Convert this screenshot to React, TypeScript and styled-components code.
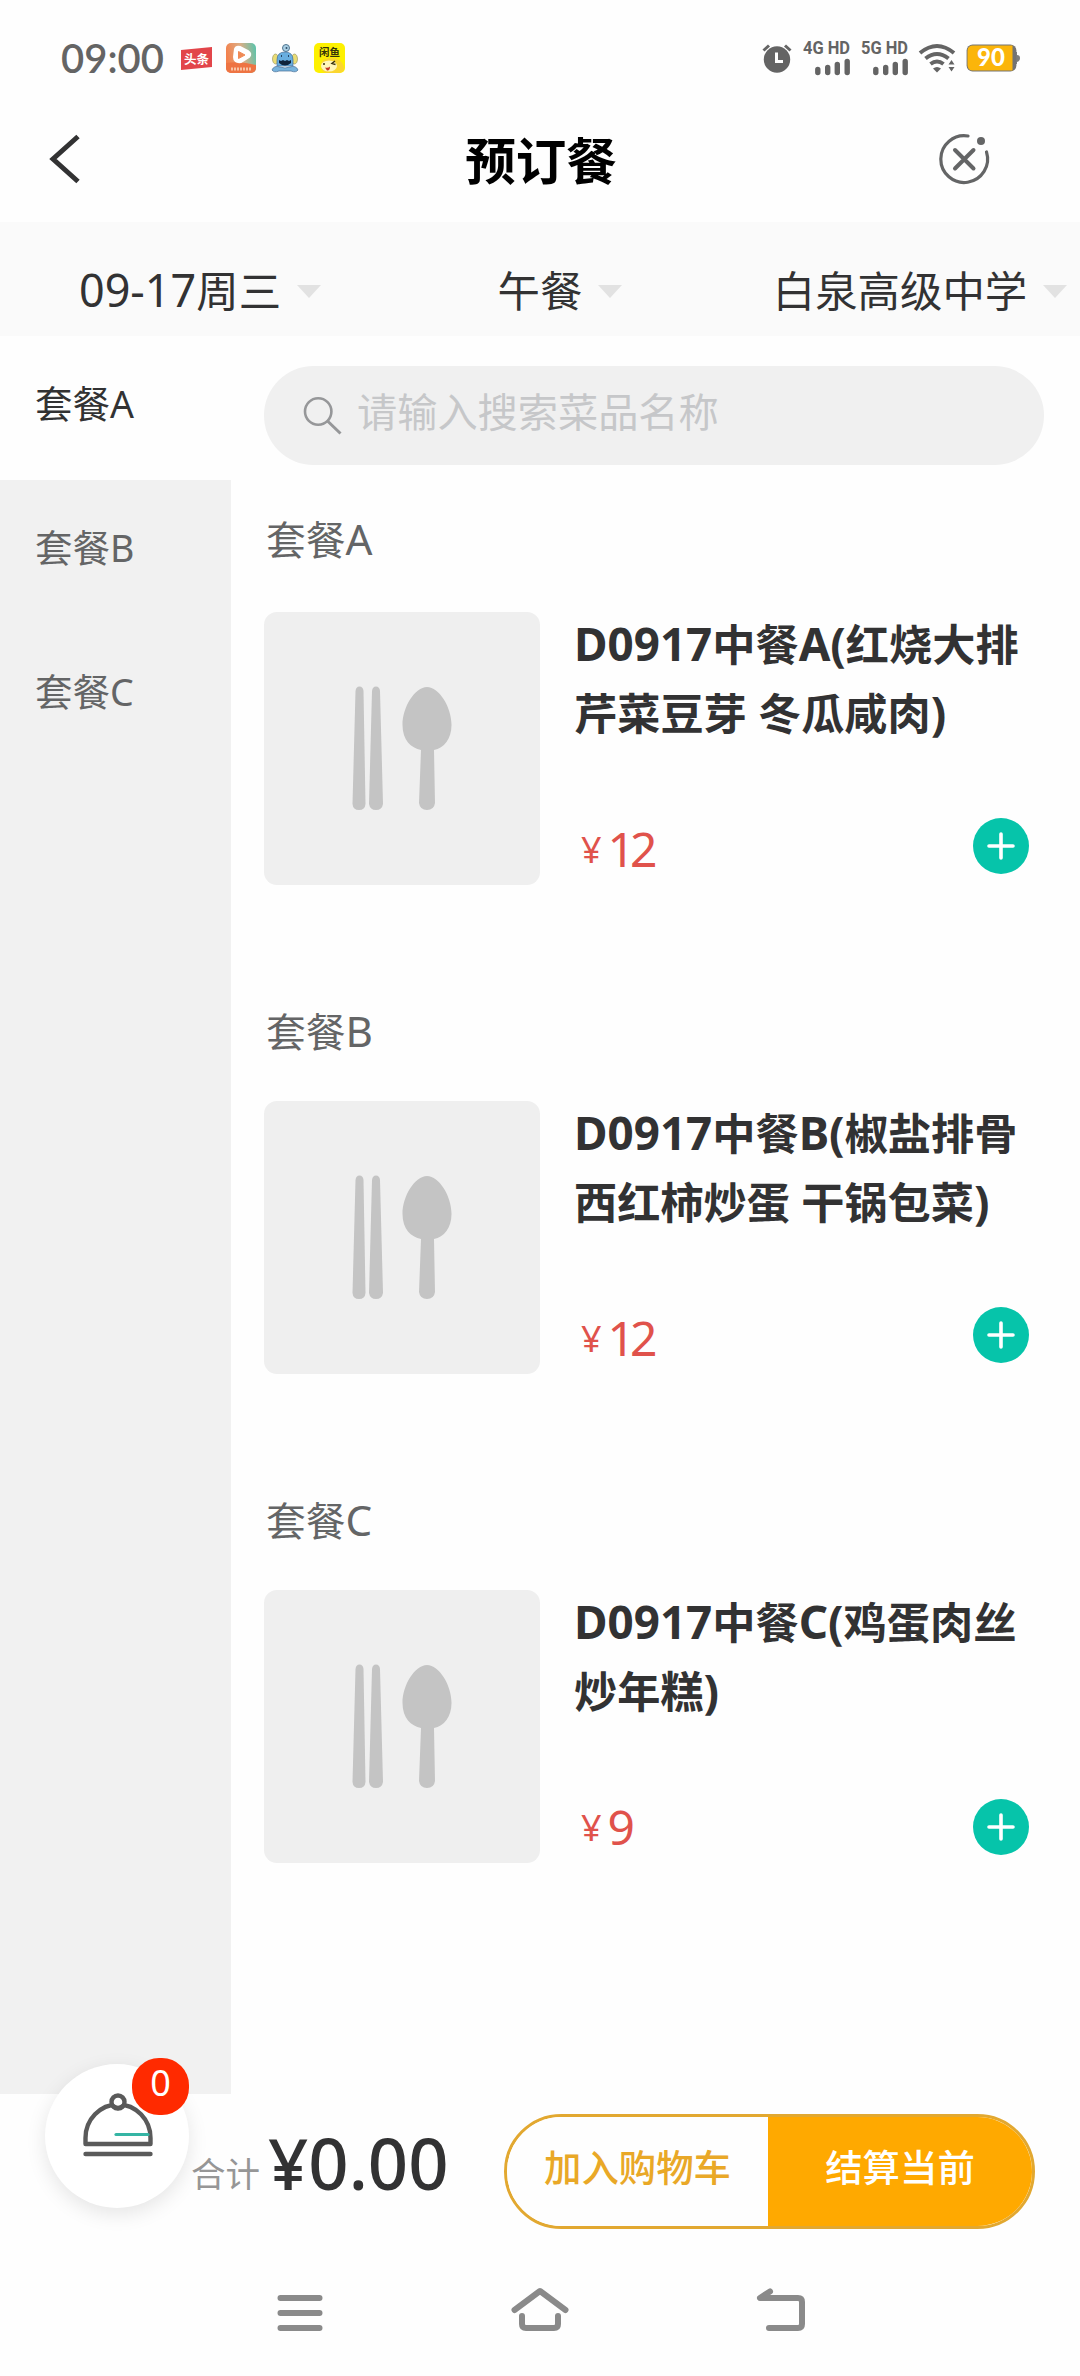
import React from "react";
import styled, { createGlobalStyle } from "styled-components";

const GlobalStyle = createGlobalStyle`
  * { box-sizing: border-box; }
  body { margin: 0; background: #fefefe; }
  button { border: 0; padding: 0; background: none; font: inherit; color: inherit; }
`;

const Screen = styled.div`
  display: flex;
  flex-direction: column;
  width: 1080px;
  height: 2376px;
  overflow: hidden;
  background: #fefefe;
  color: #323233;
  font-family: "Noto Sans", "Noto Sans CJK SC", sans-serif;
`;

/* ---------- status bar ---------- */

const StatusBar = styled.div`
  display: flex;
  align-items: center;
  justify-content: space-between;
  height: 116px;
  padding: 0 60px 0 61px;
`;

const StatusGroup = styled.div<{ $gap: number }>`
  display: flex;
  align-items: center;
  gap: ${(p) => p.$gap}px;
`;

const Clock = styled.span`
  width: 104px;
  color: #646464;
  font-family: Lato, "Noto Sans", sans-serif;
  font-size: 40px;
  font-weight: 600;
  line-height: 40px;
`;

const Glyph = styled.svg`
  display: block;
  flex: none;
  overflow: visible;
`;

const cjk = '"Noto Sans CJK SC", sans-serif';

const NewsApp = () => (
  <Glyph width="29" height="30" viewBox="0 0 29 30">
    <path d="M0 7 31 4V24L0 27Z" fill="#e2454a" />
    <text x="15.5" y="20.5" textAnchor="middle" fontFamily={cjk} fontWeight="700" fontSize="12.5" fill="#fff">头条</text>
  </Glyph>
);

const VideoApp = () => (
  <Glyph width="30" height="30" viewBox="0 0 30 30">
    <defs>
      <linearGradient id="video" x1="0" y1="0.3" x2="1" y2="0.1">
        <stop offset="0" stopColor="#f3814d" />
        <stop offset="0.5" stopColor="#dcae85" />
        <stop offset="1" stopColor="#58c4ac" />
      </linearGradient>
    </defs>
    <rect width="30" height="30" rx="5" fill="url(#video)" />
    <path d="M0 20Q15 18 30 22V25a5 5 0 0 1-5 5H5a5 5 0 0 1-5-5Z" fill="#ee7443" />
    <path d="M9 6Q10 3 14 4L22 8Q26 11 23 14L15 19Q8 20 8 14Z" fill="#fff" stroke="#fff" strokeWidth="2" />
    <path d="M12.500 8.500 19 12 12.500 15.500Z" fill="#f08a55" stroke="#f08a55" strokeLinejoin="round" />
    <path d="M5 26H25" stroke="#f8c4a5" strokeWidth="3" strokeDasharray="2 1" />
  </Glyph>
);

const MascotApp = () => (
  <Glyph width="26" height="30" viewBox="0 0 26 30">
    <circle cx="14" cy="5" r="3.5" fill="#a9cfe5" stroke="#51758f" />
    <circle cx="14.5" cy="5" r="1" fill="#31506a" />
    <ellipse cx="3.5" cy="16" rx="3" ry="5" fill="#e9dc75" stroke="#8e8c58" strokeWidth=".6" />
    <ellipse cx="22.5" cy="16" rx="3" ry="5" fill="#e9dc75" stroke="#8e8c58" strokeWidth=".6" />
    <path d="M5 17Q5 9 13 9T21 17V23H5Z" fill="#68aee0" stroke="#466f96" strokeWidth=".7" />
    <path d="M0 27Q2 22 8 24L13 25 18 24Q24 22 26 27 24 30 19 28H7Q2 30 0 27Z" fill="#78b3dc" stroke="#466f96" strokeWidth=".7" />
    <path d="M7 17 9 18 11 17 13 18 15 17 17 18 19 17V20Q13 25 7 20Z" fill="#10233b" />
    <path d="M9 13H10M16 13H17" stroke="#10233b" strokeWidth="1.6" />
  </Glyph>
);

const MarketApp = () => (
  <Glyph width="31" height="30" viewBox="0 0 31 30">
    <rect width="31" height="30" rx="5" fill="#fdf000" />
    <path d="M7 21Q8 15 17 15 27 14 30 24V27Q28 30 25 30H12Q6 28 7 21Z" fill="#fbd62f" />
    <ellipse cx="15" cy="23" rx="8" ry="5.5" fill="#fff6bb" />
    <text x="15.5" y="13" textAnchor="middle" fontFamily={cjk} fontWeight="700" fontSize="10.5" fill="#34330a">闲鱼</text>
    <path d="M10 20V22M21 18 18 20.500 21.500 21.500" stroke="#3a3210" strokeWidth="1.5" fill="none" />
    <path d="M11 24.500Q14 25.500 16 23.500 16 28 13 27.500Z" fill="#c23726" />
  </Glyph>
);

const AlarmIcon = () => (
  <Glyph width="30" height="30" viewBox="0 0 30 30">
    <circle cx="15" cy="16.5" r="13.2" fill="#646464" />
    <path d="M1.5 7.5 7 2.5M28.5 7.5 23 2.5" stroke="#646464" strokeWidth="3" />
    <path d="M14.5 9.5V18.5H21" stroke="#fff" strokeWidth="3" fill="none" />
  </Glyph>
);

const Signal = ({ label }: { label: string }) => (
  <Glyph width="47" height="34" viewBox="0 0 47 34">
    <text x="0" y="13" textLength="47" lengthAdjust="spacingAndGlyphs" fontFamily="Roboto, sans-serif" fontWeight="700" fontSize="18" fill="#646464">{label}</text>
    <path d="M14.8 28.5V31.5M24.7 26.5V31.5M34.3 23.5V31.5M44.2 20.5V31.5" stroke="#646464" strokeWidth="5.4" strokeLinecap="round" />
  </Glyph>
);

const WifiIcon = () => (
  <Glyph width="36" height="30" viewBox="0 0 36 30" fill="none" stroke="#646464" strokeWidth="4">
    <path d="M1 10Q18-4 35 10M6.5 15.5Q18 6.5 29.5 15.5M11.5 21Q18 16 24.5 21" />
    <path d="M18 29.5 14 25.5Q18 22.5 22 25.5Z" fill="#646464" stroke="none" />
    <path d="M29.5 21.5 32.5 17 35.5 21.5ZM29.5 24 32.5 28.5 35.5 24Z" fill="#646464" stroke="none" />
  </Glyph>
);

const BatteryIcon = () => (
  <Glyph width="54" height="28" viewBox="0 0 54 28">
    <path d="M49 8H51V11Q54 11 54 14T51 18V20H49Z" fill="#7d7d7d" />
    <rect x=".6" y=".6" width="49.8" height="26.8" rx="6" fill="#737373" />
    <path d="M7 1.5H46.5V26.5H7Q1.5 26.5 1.5 21V7Q1.5 1.5 7 1.5Z" fill="#fbb50a" />
    <text x="25" y="22.2" textAnchor="middle" fontFamily="Lato, sans-serif" fontWeight="900" fontSize="24" fill="#fff">90</text>
  </Glyph>
);

/* ---------- header ---------- */

const Header = styled.header`
  display: grid;
  grid-template-columns: 140px 1fr 140px;
  align-items: center;
  height: 106px;
  padding: 0 0 20px;
`;

const BackButton = styled.button`
  display: flex;
  padding-left: 49px;
`;

const CloseButton = styled.button`
  display: flex;
  justify-content: flex-end;
  padding-right: 91px;
`;

const Title = styled.h1`
  margin: 0;
  padding: 3px 0 0 2px;
  color: #000;
  font-size: 50.5px;
  font-weight: 700;
  line-height: 60px;
  text-align: center;
`;

/* ---------- filters ---------- */

const Filters = styled.nav`
  display: grid;
  grid-template-columns: repeat(3, 360px);
  height: 114px;
  padding-top: 24px;
  background: #fafafa;
`;

const Filter = styled.button`
  display: flex;
  align-items: center;
  justify-content: center;
  gap: 16px;
  color: #323233;
  font-size: 42.4px;
  line-height: 60px;
  white-space: nowrap;
`;

const Caret = styled.i`
  width: 24px;
  margin-right: -40px;
  border: 12px solid transparent;
  border-top: 13px solid #e2e2e2;
  border-bottom: 0;
`;

const Latin = styled.span`
  font-size: 1.06em;
  line-height: 1;
`;

const Mixed = ({ text }: { text: string }) => (
  <>
    {text.split(/([\w()-]+)/).map((part, i) => (i % 2 ? <Latin key={i}>{part}</Latin> : part))}
  </>
);

/* ---------- body ---------- */

const Body = styled.div`
  display: flex;
  height: 1758px;
`;

const Sidebar = styled.aside`
  width: 231px;
  background: #f1f1f1;
`;

const Category = styled.button<{ $active: boolean }>`
  display: flex;
  align-items: center;
  width: 100%;
  height: 144px;
  padding: 0 0 8px 35px;
  background: ${(p) => (p.$active ? "#fefefe" : "transparent")};
  color: ${(p) => (p.$active ? "#323233" : "#646566")};
  font-size: 37.5px;
  line-height: 50px;
`;

const Content = styled.main`
  flex: 1;
  padding: 30px 36px 0 33px;
`;

const SearchBox = styled.label`
  display: flex;
  align-items: center;
  gap: 15px;
  height: 99px;
  padding-left: 40px;
  border-radius: 50px;
  background: #f0f0f0;
`;

const Placeholder = styled.span`
  padding-bottom: 8px;
  color: #c6c7c9;
  font-size: 40.2px;
  line-height: 56px;
`;

const Section = styled.section`
  height: 489px;
`;

const SectionTitle = styled.h2<{ $first: boolean }>`
  margin: 0;
  padding: ${(p) => (p.$first ? 45 : 48)}px 0 0 2px;
  height: 147px;
  color: #646566;
  font-size: 39.8px;
  font-weight: 400;
  line-height: 60px;
`;

const Dish = styled.article`
  display: flex;
  gap: 34px;
`;

const Thumb = styled.div`
  display: flex;
  align-items: center;
  justify-content: center;
  width: 276px;
  height: 273px;
  border-radius: 13px;
  background: #efefef;
`;

const DishInfo = styled.div`
  display: flex;
  flex: 1;
  flex-direction: column;
  justify-content: space-between;
`;

const DishName = styled.h3`
  margin: -2px 0 0;
  font-size: 43.2px;
  font-weight: 700;
  line-height: 69px;
  white-space: nowrap;
`;

const NameLine = styled.span`
  display: block;
  height: 69px;
`;

const PriceRow = styled.div`
  display: flex;
  align-items: center;
  justify-content: space-between;
  height: 56px;
  margin-bottom: 11px;
  padding: 0 15px 0 7px;
`;

const Price = styled.span`
  padding-top: 5px;
  color: #e0524b;
  font-size: 48px;
  letter-spacing: -5px;
  line-height: 56px;
`;

const Currency = styled.small`
  margin-right: 6px;
  font-size: 36px;
  letter-spacing: 0;
  line-height: 1;
  vertical-align: 4px;
`;

const AddButton = styled.button<{ $last: boolean }>`
  display: flex;
  align-items: center;
  justify-content: center;
  width: 56px;
  height: 56px;
  margin-top: ${(p) => (p.$last ? 6 : 0)}px;
  border-radius: 50%;
  background: #06c4aa;
`;

/* ---------- checkout ---------- */

const Checkout = styled.footer`
  display: flex;
  height: 156px;
  padding-left: 45px;
`;

const Cart = styled.button`
  position: relative;
  display: flex;
  justify-content: center;
  width: 144px;
  height: 144px;
  margin-top: -30px;
  padding: 29px 0 0 2px;
  border-radius: 50%;
  background: #fff;
  box-shadow: 0 6px 20px rgba(0, 0, 0, 0.1);
`;

const Badge = styled.span`
  position: absolute;
  top: -6px;
  right: 0;
  width: 57px;
  height: 57px;
  border-radius: 27px;
  background: #ff2a00;
  color: #fff;
  font-size: 36px;
  line-height: 49px;
  text-align: center;
`;

const Total = styled.div`
  width: 315px;
  padding: 21px 0 0 2px;
  line-height: 96px;
  white-space: nowrap;
`;

const TotalLabel = styled.span`
  margin-right: 8px;
  color: #969696;
  font-size: 34.5px;
  line-height: 1;
  vertical-align: 3px;
`;

const TotalValue = styled.strong`
  font-size: 70.5px;
  font-weight: 500;
`;

const Actions = styled.div`
  display: grid;
  grid-template-columns: 261px 1fr;
  width: 531px;
  height: 115px;
  margin-top: 20px;
  overflow: hidden;
  border: 3px solid #e2a830;
  border-radius: 58px;
`;

const Action = styled.button<{ $primary?: boolean }>`
  padding-bottom: 11px;
  background: ${(p) => (p.$primary ? "#ffa900" : "#fefefe")};
  color: ${(p) => (p.$primary ? "#fff" : "#e9a827")};
  font-size: 37.4px;
  font-weight: 500;
`;

const SystemNav = styled.div`
  display: flex;
  justify-content: center;
  gap: 191px;
  padding: 38px 0 0 1px;
`;

const dishes = [
  { group: "套餐A", name: ["D0917中餐A(红烧大排", "芹菜豆芽 冬瓜咸肉)"], price: 12 },
  { group: "套餐B", name: ["D0917中餐B(椒盐排骨", "西红柿炒蛋 干锅包菜)"], price: 12 },
  { group: "套餐C", name: ["D0917中餐C(鸡蛋肉丝", "炒年糕)"], price: 9 },
];

export default function App() {
  return (
    <Screen>
      <GlobalStyle />
      <StatusBar>
        <StatusGroup $gap={16}>
          <Clock>09:00</Clock>
          <NewsApp />
          <VideoApp />
          <MascotApp />
          <MarketApp />
        </StatusGroup>
        <StatusGroup $gap={11}>
          <AlarmIcon />
          <Signal label="4G HD" />
          <Signal label="5G HD" />
          <WifiIcon />
          <BatteryIcon />
        </StatusGroup>
      </StatusBar>

      <Header>
        <BackButton>
          <Glyph width="31" height="48" viewBox="0 0 31 48" fill="none" stroke="#323233" strokeWidth="5">
            <path d="M29 1.5 4 24 29 46.5" />
          </Glyph>
        </BackButton>
        <Title>预订餐</Title>
        <CloseButton>
          <Glyph width="50" height="50" viewBox="0 0 50 50" fill="none" stroke="#646566" strokeWidth="3.2">
            <path d="M29 2A23.4 23.4 0 1 0 47.5 18" strokeLinecap="round" />
            <path d="M16 16 34.500 34.500M34.500 16 16 34.500" strokeWidth="4" strokeLinecap="round" />
            <circle cx="42" cy="7" r="4" fill="#646566" stroke="none" />
          </Glyph>
        </CloseButton>
      </Header>

      <Filters>
        {["09-17周三", "午餐", "白泉高级中学"].map((label) => (
          <Filter key={label}>
            <span><Mixed text={label} /></span>
            <Caret />
          </Filter>
        ))}
      </Filters>

      <Body>
        <Sidebar>
          {dishes.map((d, i) => (
            <Category key={d.group} $active={i === 0}>{d.group}</Category>
          ))}
        </Sidebar>
        <Content>
          <SearchBox>
            <Glyph width="38" height="37" viewBox="0 0 38 37" fill="none" stroke="#969799" strokeWidth="2.6">
              <circle cx="14.2" cy="14.5" r="13.2" />
              <path d="M23.5 24 36.5 36.5" strokeWidth="3" />
            </Glyph>
            <Placeholder>请输入搜索菜品名称</Placeholder>
          </SearchBox>
          {dishes.map((d, i) => (
            <Section key={d.group}>
              <SectionTitle $first={i === 0}><Mixed text={d.group} /></SectionTitle>
              <Dish>
                <Thumb>
                  <Glyph width="100" height="124" viewBox="0 0 100 124" fill="#c4c4c4">
                    <path d="M3.500 4Q4-.5 7.500-.5T11.500 4L13.500 117Q13 123 7 123T.5 117Z" />
                    <path d="M20 4Q20.500-.5 24-.5T28 4L31 117Q30 123 24 123T17 117Z" />
                    <path d="M75 0C87 0 99.500 20 99.500 38 99.500 52 92 61 82 63L83 116Q82 123 75 123T67 116L69 63C59 61 50.500 53 50.500 38 50.500 20 63 0 75 0Z" />
                  </Glyph>
                </Thumb>
                <DishInfo>
                  <DishName>
                    {d.name.map((line) => (
                      <NameLine key={line}><Mixed text={line} /></NameLine>
                    ))}
                  </DishName>
                  <PriceRow>
                    <Price><Currency>¥</Currency>{d.price}</Price>
                    <AddButton $last={i === dishes.length - 1}>
                      <Glyph width="28" height="28" viewBox="0 0 28 28" stroke="#fff" strokeWidth="3.6" strokeLinecap="round">
                        <path d="M14 2V26M2 14H26" />
                      </Glyph>
                    </AddButton>
                  </PriceRow>
                </DishInfo>
              </Dish>
            </Section>
          ))}
        </Content>
      </Body>

      <Checkout>
        <Cart>
          <Glyph width="70" height="63" viewBox="0 0 70 63" fill="none" stroke="#5a5a5a" strokeWidth="4.4" strokeLinecap="round" strokeLinejoin="round">
            <path d="M2.500 51V45A32.500 33.500 0 0 1 67.500 45V51Z" />
            <circle cx="35" cy="9" r="6.500" fill="#fff" />
            <path d="M30 13Q35 17 40 13" />
            <path d="M2.500 61H67.500" />
            <path d="M33 41.500H65" stroke="#35b5a4" strokeWidth="3.200" />
          </Glyph>
          <Badge>0</Badge>
        </Cart>
        <Total>
          <TotalLabel>合计</TotalLabel>
          <TotalValue>¥0.00</TotalValue>
        </Total>
        <Actions>
          <Action>加入购物车</Action>
          <Action $primary>结算当前</Action>
        </Actions>
      </Checkout>

      <SystemNav>
        <Glyph width="46" height="46" viewBox="0 0 46 46" stroke="#8a8a8a" strokeWidth="6" strokeLinecap="round">
          <path d="M3.500 10H42.500M3.500 25H42.500M3.500 40H42.500" />
        </Glyph>
        <Glyph width="52" height="46" viewBox="0 0 52 46" fill="none" stroke="#8a8a8a" strokeWidth="6" strokeLinecap="round" strokeLinejoin="round">
          <path d="M.5 22 26 3 51.500 22M8 28V36Q8 40 12 40H40Q44 40 44 36V28" />
        </Glyph>
        <Glyph width="48" height="46" viewBox="0 0 48 46" fill="none" stroke="#8a8a8a" strokeWidth="6" strokeLinecap="round" strokeLinejoin="round">
          <path d="M13 3.500 3 10H41Q45 10 45 14V36Q45 40 41 40H12" />
        </Glyph>
      </SystemNav>
    </Screen>
  );
}
